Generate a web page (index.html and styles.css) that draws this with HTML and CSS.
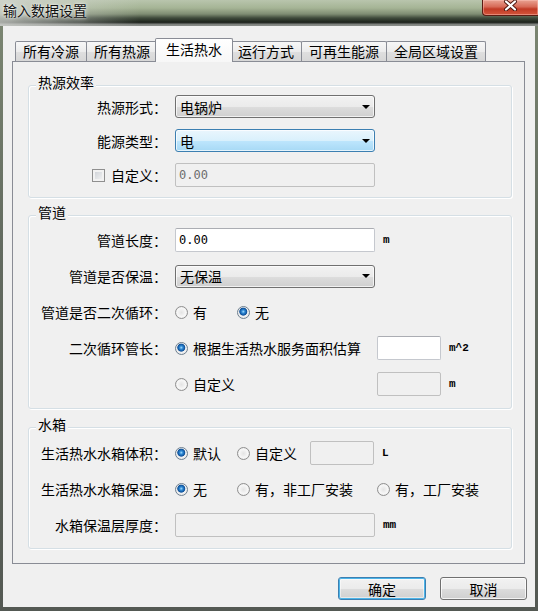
FILE: index.html
```html
<!DOCTYPE html>
<html lang="zh-CN">
<head>
    <meta charset="UTF-8">
    <title>输入数据设置</title>
    <link rel="stylesheet" href="styles.css">
</head>
<body>
<div class="window">
    <div class="titlebar">
        <span class="title">输入数据设置</span>
        <div class="close">
            <svg width="15" height="11" viewBox="0 0 15 11">
                <path d="M3 1.5 L12 9.5 M12 1.5 L3 9.5" stroke="#4a140c" stroke-width="4" stroke-linecap="round"/>
                <path d="M3 1.5 L12 9.5 M12 1.5 L3 9.5" stroke="#ffffff" stroke-width="2.2" stroke-linecap="round"/>
            </svg>
        </div>
    </div>

    <div class="client">
        <!-- tabs -->
        <div class="tabs">
            <div class="tab">所有冷源</div>
            <div class="tab">所有热源</div>
            <div class="tab active">生活热水</div>
            <div class="tab">运行方式</div>
            <div class="tab">可再生能源</div>
            <div class="tab">全局区域设置</div>
        </div>

        <div class="panel">
            <!-- 热源效率 -->
            <div class="group g1">
                <span class="group-title">热源效率</span>
                <div class="rows">
                    <div class="row">
                        <span class="lbl">热源形式：</span>
                        <div class="combo"><span>电锅炉</span><i class="arrow"></i></div>
                    </div>
                    <div class="row">
                        <span class="lbl">能源类型：</span>
                        <div class="combo hot"><span>电</span><i class="arrow"></i></div>
                    </div>
                    <div class="row">
                        <span class="lbl lbl-check"><i class="check"></i>自定义：</span>
                        <div class="edit off">0.00</div>
                    </div>
                </div>
            </div>

            <!-- 管道 -->
            <div class="group g2">
                <span class="group-title">管道</span>
                <div class="rows">
                    <div class="row">
                        <span class="lbl">管道长度：</span>
                        <div class="edit">0.00</div>
                        <span class="unit">m</span>
                    </div>
                    <div class="row">
                        <span class="lbl">管道是否保温：</span>
                        <div class="combo"><span>无保温</span><i class="arrow"></i></div>
                    </div>
                    <div class="row">
                        <span class="lbl">管道是否二次循环：</span>
                        <span class="opt w62"><i class="radio"></i>有</span>
                        <span class="opt"><i class="radio on"></i>无</span>
                    </div>
                    <div class="row">
                        <span class="lbl">二次循环管长：</span>
                        <span class="opt w202"><i class="radio on"></i>根据生活热水服务面积估算</span>
                        <div class="edit small"></div>
                        <span class="unit">m^2</span>
                    </div>
                    <div class="row">
                        <span class="lbl"></span>
                        <span class="opt w202"><i class="radio"></i>自定义</span>
                        <div class="edit small off"></div>
                        <span class="unit">m</span>
                    </div>
                </div>
            </div>

            <!-- 水箱 -->
            <div class="group g3">
                <span class="group-title">水箱</span>
                <div class="rows">
                    <div class="row">
                        <span class="lbl">生活热水水箱体积：</span>
                        <span class="opt w62"><i class="radio on"></i>默认</span>
                        <span class="opt w73"><i class="radio"></i>自定义</span>
                        <div class="edit small off"></div>
                        <span class="unit">L</span>
                    </div>
                    <div class="row">
                        <span class="lbl">生活热水水箱保温：</span>
                        <span class="opt w62"><i class="radio on"></i>无</span>
                        <span class="opt w140"><i class="radio"></i>有，非工厂安装</span>
                        <span class="opt"><i class="radio"></i>有，工厂安装</span>
                    </div>
                    <div class="row">
                        <span class="lbl">水箱保温层厚度：</span>
                        <div class="edit off"></div>
                        <span class="unit">mm</span>
                    </div>
                </div>
            </div>
        </div>

        <div class="buttons">
            <div class="btn default">确定</div>
            <div class="btn cancel">取消</div>
        </div>
    </div>
</div>
</body>
</html>
```

FILE: styles.css
```css
/* General */
body {
    margin: 0;
    font-family: "Noto Sans CJK SC", "Noto Sans", sans-serif;
    font-size: 14px;
    color: #000;
    background: #5d645b;
}

.window {
    width: 538px;
    height: 611px;
    display: flex;
    flex-direction: column;
    overflow: hidden;
    background: linear-gradient(to bottom, #7d8873 0%, #636b60 40%, #545953 100%);
}

/* Title bar */
.titlebar {
    height: 26px;
    flex: none;
    display: flex;
    align-items: flex-start;
    background:
        linear-gradient(to right, rgba(214, 216, 212, 0.75) 0px, rgba(214, 216, 212, 0) 140px),
        linear-gradient(to bottom, #b9c5ad 0px, #a5b495 8px, #7f8d73 14px, #3f4a3b 18px, #1e251d 22px, #2c302c 23px, #7a7e7a 24px, #8b8f8b 26px);
}

.title {
    padding: 2px 0 0 3px;
    line-height: 17px;
    color: #111;
    text-shadow: 0 0 5px rgba(255, 255, 255, 0.9), 0 0 2px rgba(255, 255, 255, 0.8);
}

.close {
    margin-left: auto;
    width: 56px;
    height: 16px;
    box-sizing: border-box;
    border: 1px solid #5a1b12;
    border-top: none;
    border-right: none;
    border-radius: 0 0 0 4px;
    background: linear-gradient(to bottom, #e9a292 0%, #d76a57 45%, #c13a25 60%, #d4563c 100%);
    box-shadow: inset 0 0 0 1px rgba(255, 200, 190, 0.45);
    display: flex;
    justify-content: center;
    align-items: flex-start;
}

/* Client area */
.client {
    flex: 1;
    margin: 0 3px 4px;
    padding: 12px 0 0 9px;
    background: #f0f0f0;
    display: flex;
    flex-direction: column;
}

.tabs {
    height: 23px;
    display: flex;
    align-items: flex-end;
    padding-left: 3px;
    position: relative;
    z-index: 1;
}

.tab {
    height: 20px;
    box-sizing: border-box;
    border: 1px solid #898c95;
    border-bottom: none;
    border-radius: 2px 2px 0 0;
    padding: 0 7px;
    margin-left: -1px;
    line-height: 19px;
    white-space: nowrap;
    background: linear-gradient(to bottom, #f7f7f7 0%, #ececec 50%, #dfdfdf 51%, #d7d7d7 100%);
}

.tab:first-child {
    margin-left: 0;
}

.tab.active {
    height: 24px;
    margin: 0 -2px -1px -3px;
    padding: 1px 10px 0;
    line-height: 18px;
    background: linear-gradient(to bottom, #ffffff 0%, #f7f7f7 100%);
    position: relative;
    z-index: 2;
}

.panel {
    width: 513px;
    box-sizing: border-box;
    border: 1px solid #898c95;
    padding: 23px 12px 14px 15px;
    background: #f0f0f0;
}

/* Group boxes */
.group {
    border: 1px solid #d5dfe5;
    border-radius: 3px;
    box-shadow: inset 1px 1px 0 #fff, 1px 1px 0 #fff;
}

.group-title {
    display: block;
    width: fit-content;
    margin: -12px 0 0 7px;
    padding: 0 2px;
    line-height: 16px;
    background: #f0f0f0;
}

.g1 {
    padding-bottom: 10px;
}

.g1 .rows {
    margin-top: 5px;
    gap: 11px;
}

.g1 .row {
    height: 23px;
}

.g1 .row:last-child {
    height: 24px;
}

.g2 {
    margin-top: 17px;
    padding-bottom: 12px;
}

.g2 .rows {
    margin-top: 8px;
}

.g3 {
    margin-top: 18px;
    padding-bottom: 11px;
}

.g3 .rows {
    margin-top: 9px;
}

.rows {
    display: flex;
    flex-direction: column;
    gap: 12px;
}

.row {
    height: 24px;
    display: flex;
    align-items: center;
}

.lbl {
    flex: none;
    width: 138px;
    margin-right: 8px;
    text-align: right;
    white-space: nowrap;
    line-height: 18px;
}

.lbl-check {
    display: flex;
    justify-content: flex-end;
    align-items: center;
    gap: 6px;
}

/* Controls */
.combo {
    width: 200px;
    height: 23px;
    box-sizing: border-box;
    border: 1px solid #707070;
    border-radius: 3px;
    padding-left: 4px;
    display: flex;
    align-items: center;
    background: linear-gradient(to bottom, #f2f2f2 0%, #ebebeb 50%, #dddddd 51%, #cfcfcf 100%);
    box-shadow: inset 0 0 0 1px rgba(255, 255, 255, 0.7);
}

.combo span {
    flex: 1;
    line-height: 18px;
}

.combo.hot {
    border-color: #3c7fb1;
    background: linear-gradient(to bottom, #eaf6fd 0%, #d9f0fc 50%, #bee6fd 51%, #a7d9f5 100%);
}

.arrow {
    width: 0;
    height: 0;
    margin-right: 4px;
    border-left: 4px solid transparent;
    border-right: 4px solid transparent;
    border-top: 4px solid #000;
}

.edit {
    width: 200px;
    height: 24px;
    box-sizing: border-box;
    border: 1px solid #c5c8ce;
    border-top-color: #abadb3;
    border-radius: 2px;
    padding: 0 3px;
    background: #fff;
    font-family: "DejaVu Sans Mono", monospace;
    font-size: 12px;
    line-height: 22px;
    flex: none;
}

.edit.off {
    background: #f0f0f0;
    border-color: #c0c0c0;
    color: #6d6d6d;
}

.edit.small {
    width: 64px;
}

.unit {
    margin-left: 8px;
    color: #000;
    font-family: "Liberation Mono", monospace;
    font-size: 11px;
    font-weight: bold;
}

.opt {
    flex: none;
    display: flex;
    align-items: center;
    gap: 5px;
    line-height: 18px;
    white-space: nowrap;
}

.w62 { width: 62px; }
.w73 { width: 73px; }
.w140 { width: 140px; }
.w202 { width: 202px; }

.radio {
    width: 13px;
    height: 13px;
    box-sizing: border-box;
    border: 1px solid #8f8f8f;
    border-radius: 50%;
    background: radial-gradient(circle at 50% 50%, #e4e4e4 0%, #f7f7f7 55%, #d8d8d8 100%);
    flex: none;
}

.radio.on {
    border-color: #6e7f8f;
    background: radial-gradient(circle at 48% 42%, #a6dcfb 0px, #2f8ad6 1.6px, #0d4f98 3.6px, #f2f2f2 4.4px, #e2e2e2 100%);
}

.check {
    width: 13px;
    height: 13px;
    box-sizing: border-box;
    border: 1px solid #8f8f8f;
    background: linear-gradient(135deg, #c9cdd3 0%, #f7f7f7 100%);
    box-shadow: inset 0 0 0 2px #f2f2f2;
}

/* Buttons */
.buttons {
    display: flex;
    justify-content: flex-end;
    gap: 14px;
    margin-top: 13px;
    padding-right: 8px;
}

.btn {
    height: 23px;
    box-sizing: border-box;
    border: 1px solid #707070;
    border-radius: 3px;
    display: flex;
    align-items: center;
    justify-content: center;
    line-height: 18px;
    background: linear-gradient(to bottom, #f2f2f2 0%, #ebebeb 50%, #dddddd 51%, #cfcfcf 100%);
    box-shadow: inset 0 0 0 1px rgba(255, 255, 255, 0.75);
}

.btn.default {
    width: 88px;
    border-color: #3c7fb1;
    box-shadow: inset 0 0 0 1px #4cb4e8, inset 0 0 0 2px rgba(255, 255, 255, 0.5);
}

.btn.cancel {
    width: 87px;
}
```
